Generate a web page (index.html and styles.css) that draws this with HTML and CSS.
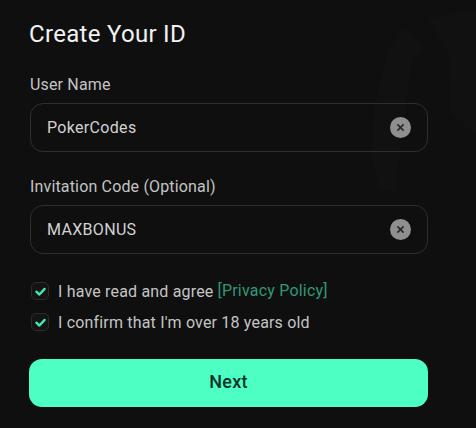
FILE: index.html
```html
<!DOCTYPE html>
<html lang="en">
<head>
<meta charset="utf-8">
<title>Create Your ID</title>
<link rel="stylesheet" href="styles.css">
</head>
<body>
<svg class="watermark" viewBox="0 0 476 428" aria-hidden="true">
  <path class="wm-a" d="M406 28 C394 38 386 55 382 75 L374 110 L372 160 L380 190 L395 190 L412 60 L422 48 Z"/>
  <path class="wm-b" d="M428 18 L476 10 L476 135 L450 112 L449 55 Z"/>
</svg>
<main class="form">
  <h1 class="title">Create Your ID</h1>
  <label class="label">User Name</label>
  <div class="field">
    <span class="value">PokerCodes</span>
    <span class="clear"><svg viewBox="0 0 10 10"><path d="M2.2 2.2 7.8 7.8M7.8 2.2 2.2 7.8"/></svg></span>
  </div>
  <label class="label label-second">Invitation Code (Optional)</label>
  <div class="field">
    <span class="value">MAXBONUS</span>
    <span class="clear"><svg viewBox="0 0 10 10"><path d="M2.2 2.2 7.8 7.8M7.8 2.2 2.2 7.8"/></svg></span>
  </div>
  <div class="checks">
    <div class="check">
      <span class="box"><svg viewBox="0 0 12 12"><path d="M2.2 6.2 5 8.8 9.8 3.6"/></svg></span>
      <span class="check-text">I have read and agree</span>
      <a class="link">[Privacy Policy]</a>
    </div>
    <div class="check">
      <span class="box"><svg viewBox="0 0 12 12"><path d="M2.2 6.2 5 8.8 9.8 3.6"/></svg></span>
      <span class="check-text">I confirm that I'm over 18 years old</span>
    </div>
  </div>
  <button class="next">Next</button>
</main>
</body>
</html>
```
FILE: styles.css
```css
* { box-sizing: border-box; }
html, body { margin: 0; height: 100%; }
body {
  position: relative;
  width: 476px;
  height: 428px;
  overflow: hidden;
  background: #0f0f10;
  font-family: Roboto, "Liberation Sans", sans-serif;
  color: #d0d0d0;
}
.watermark { position: absolute; inset: 0; width: 476px; height: 428px; }
.wm-a { fill: #111112; }
.wm-b { fill: #111112; }
.form {
  position: relative;
  display: flex;
  flex-direction: column;
  padding: 19px 48px 0 29px;
}
.title {
  margin: 0;
  font-size: 24px;
  line-height: 30px;
  font-weight: 400;
  color: #f2f2f2;
  letter-spacing: 0.3px;
}
.label {
  margin: 25px 0 0 1px;
  font-size: 16px;
  line-height: 22px;
  letter-spacing: 0.16px;
  color: #c4c4c4;
}
.label-second { margin-top: 24px; }
.field {
  display: flex;
  align-items: center;
  justify-content: space-between;
  height: 49px;
  margin: 7px 0 0 1px;
  padding: 0 16.5px 0 16px;
  border: 1.5px solid #2e2e2f;
  border-radius: 13px;
}
.value { font-size: 16px; letter-spacing: 0.32px; color: #d2d2d2; }
.clear {
  display: flex;
  align-items: center;
  justify-content: center;
  width: 21px;
  height: 21px;
  border-radius: 50%;
  background: #8f8f8f;
}
.clear svg { width: 11px; height: 11px; }
.clear path { fill: none; stroke: #2a2a2a; stroke-width: 1.5; }
.checks {
  display: flex;
  flex-direction: column;
  gap: 13px;
  margin: 28px 0 0 2px;
}
.check { display: flex; align-items: center; height: 18px; }
.box {
  display: flex;
  align-items: center;
  justify-content: center;
  width: 18px;
  height: 18px;
  border: 1.5px solid #2c2c2d;
  border-radius: 5px;
  margin-right: 9px;
  background: #141415;
}
.box svg { width: 13px; height: 13px; }
.box path { fill: none; stroke: #45e8b0; stroke-width: 2.2; stroke-linecap: round; stroke-linejoin: round; }
.check-text { font-size: 16px; letter-spacing: 0.18px; color: #c4c4c4; }
.link { margin: -2px 0 0 4px; font-size: 16px; letter-spacing: 0.2px; color: #2f9a78; }
.next {
  height: 48px;
  margin-top: 28px;
  border: 0;
  border-radius: 13px;
  background: #4dffc3;
  color: #08322a;
  font-family: inherit;
  font-size: 18px;
  letter-spacing: 0.25px;
  font-weight: 500;
  padding: 0 0 3px;
}
```
